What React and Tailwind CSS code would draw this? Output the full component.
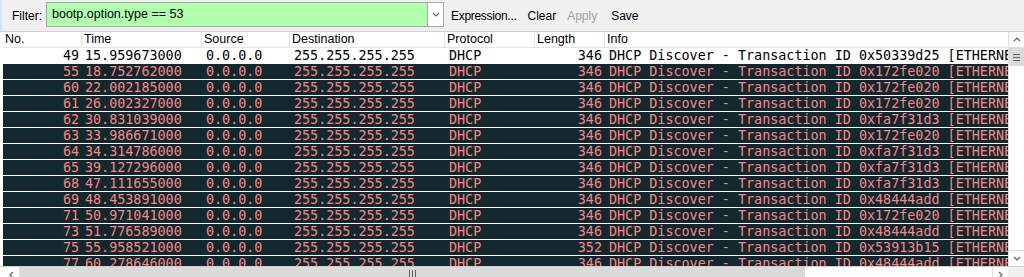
import React from "react";

const rows = [
  ["49", "15.959673000", "346", "0x50339d25"],
  ["55", "18.752762000", "346", "0x172fe020"],
  ["60", "22.002185000", "346", "0x172fe020"],
  ["61", "26.002327000", "346", "0x172fe020"],
  ["62", "30.831039000", "346", "0xfa7f31d3"],
  ["63", "33.986671000", "346", "0x172fe020"],
  ["64", "34.314786000", "346", "0xfa7f31d3"],
  ["65", "39.127296000", "346", "0xfa7f31d3"],
  ["68", "47.111655000", "346", "0xfa7f31d3"],
  ["69", "48.453891000", "346", "0x48444add"],
  ["71", "50.971041000", "346", "0x172fe020"],
  ["73", "51.776589000", "346", "0x48444add"],
  ["75", "55.958521000", "352", "0x53913b15"],
  ["77", "60.278646000", "346", "0x48444add"],
];

const ui = { fontFamily: '"Liberation Sans", Arial, sans-serif' };
const mono = { fontFamily: '"DejaVu Sans Mono", "Liberation Mono", monospace' };

function Chevron({ dir = "down", className = "" }) {
  const pts = {
    down: "1,1 4,4 7,1",
    up: "1,4 4,1 7,4",
    left: "4,1 1,4 4,7",
    right: "1,1 4,4 1,7",
  }[dir];
  const vb = dir === "left" || dir === "right" ? "0 0 5 8" : "0 0 8 5";
  const w = dir === "left" || dir === "right" ? 5 : 8;
  const h = dir === "left" || dir === "right" ? 8 : 5;
  return (
    <svg width={w} height={h} viewBox={vb} className={className}>
      <polyline points={pts} fill="none" stroke="#606060" strokeWidth="1.2" />
    </svg>
  );
}

export default function App() {
  return (
    <div className="w-[1024px] h-[277px] overflow-hidden bg-[#f0f0f0] flex flex-col" style={ui}>
      {/* toolbar */}
      <div className="h-[31px] flex items-center text-[12px] text-black border-l-2 border-[#d7e4f2] shrink-0">
        <span className="ml-[10px] w-[34px]">Filter:</span>
        <div className="h-[25px] w-[398px] flex items-stretch border border-[#a8a8a8] bg-[#afffaf] -mt-[3px]">
          <div className="flex-1 flex items-center pl-[5px] text-[12.5px]">bootp.option.type == 53</div>
          <div className="w-[16px] bg-white border-l border-[#a8a8a8] flex items-center justify-center">
            <Chevron dir="down" />
          </div>
        </div>
        <span className="ml-[7px] tracking-[-0.3px]">Expression...</span>
        <span className="ml-[11px]">Clear</span>
        <span className="ml-[11px] text-[#a0a0a0]">Apply</span>
        <span className="ml-[14px]">Save</span>
      </div>

      {/* packet list */}
      <div className="flex-1 flex flex-col border-t border-[#d0d0d0] bg-white overflow-hidden">
        <div className="h-[234px] flex shrink-0">
          <div className="flex-1 pl-[3px] overflow-hidden">
            {/* header */}
            <div className="h-[16px] flex border-b border-[#e5e5e5] text-[12.5px] leading-[15px] text-black whitespace-nowrap">
              <div className="w-[79px] pl-[2px] border-r border-[#e5e5e5] shrink-0">No.</div>
              <div className="w-[120px] pl-[2px] border-r border-[#e5e5e5] shrink-0">Time</div>
              <div className="w-[88px] pl-[2px] border-r border-[#e5e5e5] shrink-0">Source</div>
              <div className="w-[155px] pl-[2px] border-r border-[#e5e5e5] shrink-0">Destination</div>
              <div className="w-[90px] pl-[2px] border-r border-[#e5e5e5] shrink-0">Protocol</div>
              <div className="w-[70px] pl-[2px] border-r border-[#e5e5e5] shrink-0">Length</div>
              <div className="flex-1 pl-[2px]">Info</div>
            </div>
            {rows.map((r, i) => (
              <div
                key={r[0]}
                className={
                  "h-[16px] flex border-b border-white text-[13.4px] leading-[15px] whitespace-nowrap " +
                  (i === 0 ? "bg-white text-black" : "bg-[#12272e] text-[#f78787]")
                }
                style={mono}
              >
                <div className="w-[79px] pr-[3px] text-right shrink-0">{r[0]}</div>
                <div className="w-[120px] pl-[3px] shrink-0">{r[1]}</div>
                <div className="w-[88px] pl-[4px] shrink-0">0.0.0.0</div>
                <div className="w-[155px] pl-[4px] shrink-0">255.255.255.255</div>
                <div className="w-[90px] pl-[4px] shrink-0">DHCP</div>
                <div className="w-[70px] pr-[3px] text-right shrink-0">{r[2]}</div>
                <div className="flex-1 pl-[4px] overflow-hidden">
                  DHCP Discover - Transaction ID {r[3]} [ETHERNET FRAME CHECK SEQUENCE INCORRECT]
                </div>
              </div>
            ))}
          </div>
          {/* vertical scrollbar */}
          <div className="w-[16px] shrink-0 bg-white border-l border-[#e0e0e0] flex flex-col">
            <div className="h-[16px] flex items-center justify-center border-b border-[#e0e0e0]">
              <Chevron dir="up" />
            </div>
            <div className="h-[18px] bg-[#dadada] flex flex-col items-center justify-center gap-[2px]">
              <div className="w-[7px] h-px bg-[#606060]" />
              <div className="w-[7px] h-px bg-[#606060]" />
              <div className="w-[7px] h-px bg-[#606060]" />
            </div>
            <div className="flex-1" />
            <div className="h-[16px] flex items-center justify-center border-t border-[#e0e0e0]">
              <Chevron dir="down" />
            </div>
          </div>
        </div>
        {/* horizontal scrollbar */}
        <div className="h-[17px] flex shrink-0 border-t border-[#d0d0d0] bg-white">
          <div className="w-[3px] shrink-0 bg-white" />
          <div className="w-[17px] shrink-0 flex justify-center pt-[4px] border-r border-[#e0e0e0]">
            <Chevron dir="left" />
          </div>
          <div className="w-[785px] shrink-0 bg-[#dadada] flex justify-center gap-[2px] pt-[3px]">
            <div className="w-px h-[7px] bg-[#606060]" />
            <div className="w-px h-[7px] bg-[#606060]" />
            <div className="w-px h-[7px] bg-[#606060]" />
          </div>
          <div className="w-[187px] shrink-0 bg-white" />
          <div className="w-[16px] shrink-0 flex justify-center pt-[4px] border-l border-[#e0e0e0]">
            <Chevron dir="right" />
          </div>
          <div className="flex-1 bg-[#f0f0f0]" />
        </div>
      </div>
    </div>
  );
}
